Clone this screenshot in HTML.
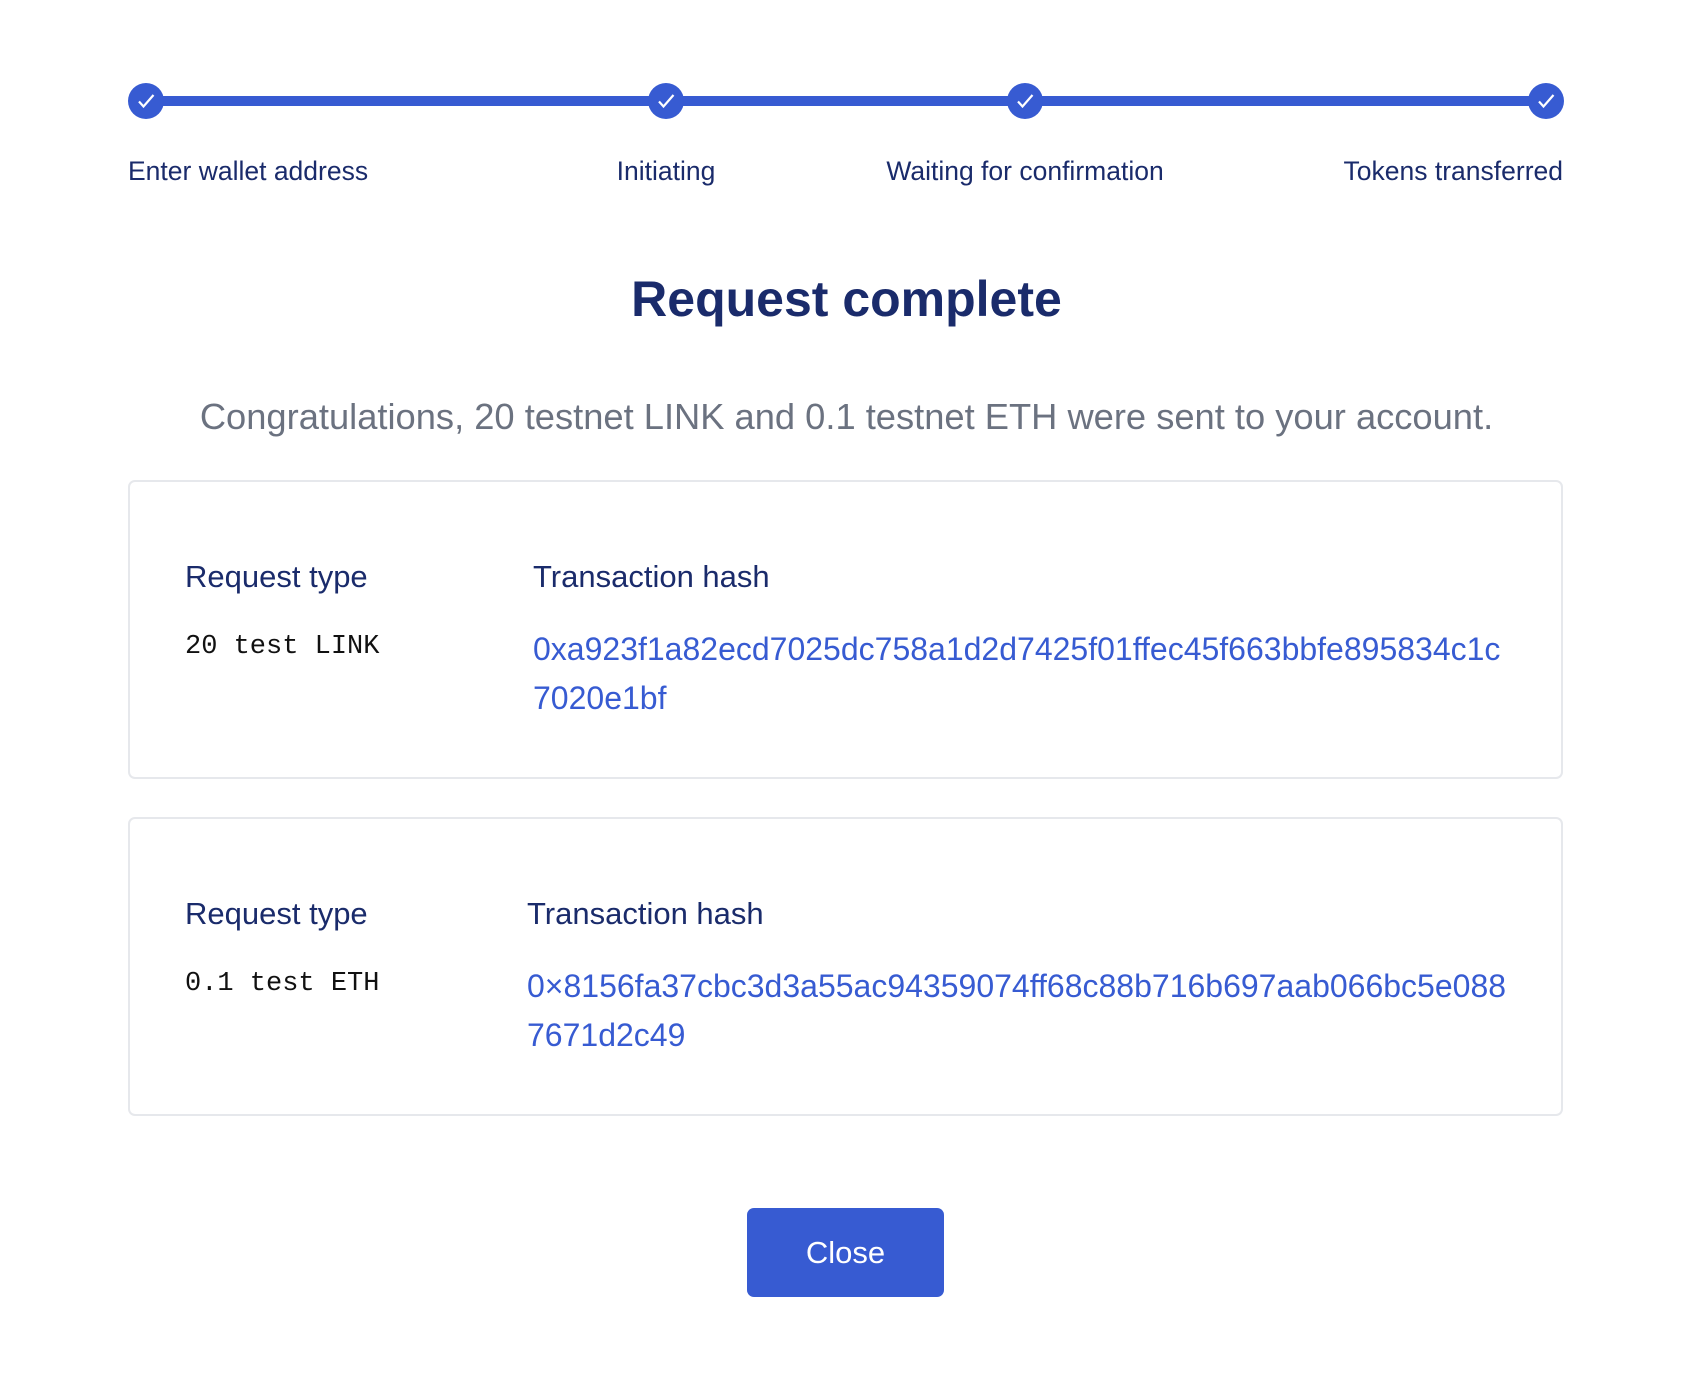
<!DOCTYPE html>
<html><head><meta charset="utf-8"><style>
body{margin:0;width:1705px;height:1382px;background:#fff;position:relative;font-family:"Liberation Sans",sans-serif;color:#1a2b6b;overflow:hidden}
.a{position:absolute;white-space:nowrap}
.line{position:absolute;left:146px;top:96px;width:1400px;height:10px;background:#375bd2}
.dot{position:absolute;top:83px;width:36px;height:36px;border-radius:50%;background:#375bd2;margin-left:-18px}
.dot svg{position:absolute;left:7px;top:7px}
.lbl{font-size:26.5px;top:156px}
.card{position:absolute;left:128px;width:1435px;border:2px solid #e6e8ec;border-radius:7px;box-sizing:border-box}
.h{font-size:31px;color:#1a2b6b}
.m{font-family:"Liberation Mono",monospace;font-size:27px;color:#111}
.hash{font-size:32px;color:#375bd2;line-height:49px;white-space:nowrap}
</style></head><body>
<div class="line"></div>
<div class="dot" style="left:146px"><svg width="22" height="22" viewBox="0 0 22 22"><path d="M4 11.5l4.5 5L18.5 5" stroke="#fff" stroke-width="2.2" fill="none"/></svg></div>
<div class="dot" style="left:666px"><svg width="22" height="22" viewBox="0 0 22 22"><path d="M4 11.5l4.5 5L18.5 5" stroke="#fff" stroke-width="2.2" fill="none"/></svg></div>
<div class="dot" style="left:1025px"><svg width="22" height="22" viewBox="0 0 22 22"><path d="M4 11.5l4.5 5L18.5 5" stroke="#fff" stroke-width="2.2" fill="none"/></svg></div>
<div class="dot" style="left:1546px"><svg width="22" height="22" viewBox="0 0 22 22"><path d="M4 11.5l4.5 5L18.5 5" stroke="#fff" stroke-width="2.2" fill="none"/></svg></div>
<div class="a lbl" style="left:128px">Enter wallet address</div>
<div class="a lbl" style="left:566px;width:200px;text-align:center">Initiating</div>
<div class="a lbl" style="left:845px;width:360px;text-align:center">Waiting for confirmation</div>
<div class="a lbl" style="left:1263px;width:300px;text-align:right">Tokens transferred</div>
<div class="a" style="left:0;width:1693px;text-align:center;top:270px;font-size:50px;font-weight:bold;color:#1a2b6b">Request complete</div>
<div class="a" style="left:0;width:1693px;text-align:center;top:396px;font-size:36.3px;color:#6b7280">Congratulations, 20 testnet LINK and 0.1 testnet ETH were sent to your account.</div>
<div class="card" style="top:480px;height:299px"></div>
<div class="card" style="top:817px;height:299px"></div>
<div class="a h" style="left:185px;top:559px">Request type</div>
<div class="a h" style="left:533px;top:559px">Transaction hash</div>
<div class="a m" style="left:185px;top:632px">20 test LINK</div>
<div class="a hash" style="left:533px;top:625px">0xa923f1a82ecd7025dc758a1d2d7425f01ffec45f663bbfe895834c1c<br>7020e1bf</div>
<div class="a h" style="left:185px;top:896px">Request type</div>
<div class="a h" style="left:527px;top:896px">Transaction hash</div>
<div class="a m" style="left:185px;top:969px">0.1 test ETH</div>
<div class="a hash" style="left:527px;top:962px">0×8156fa37cbc3d3a55ac94359074ff68c88b716b697aab066bc5e088<br>7671d2c49</div>
<div class="a" style="left:747px;top:1208px;width:197px;height:89px;background:#375bd2;border-radius:7px;color:#fff;font-size:31px;line-height:89px;text-align:center">Close</div>
</body></html>
